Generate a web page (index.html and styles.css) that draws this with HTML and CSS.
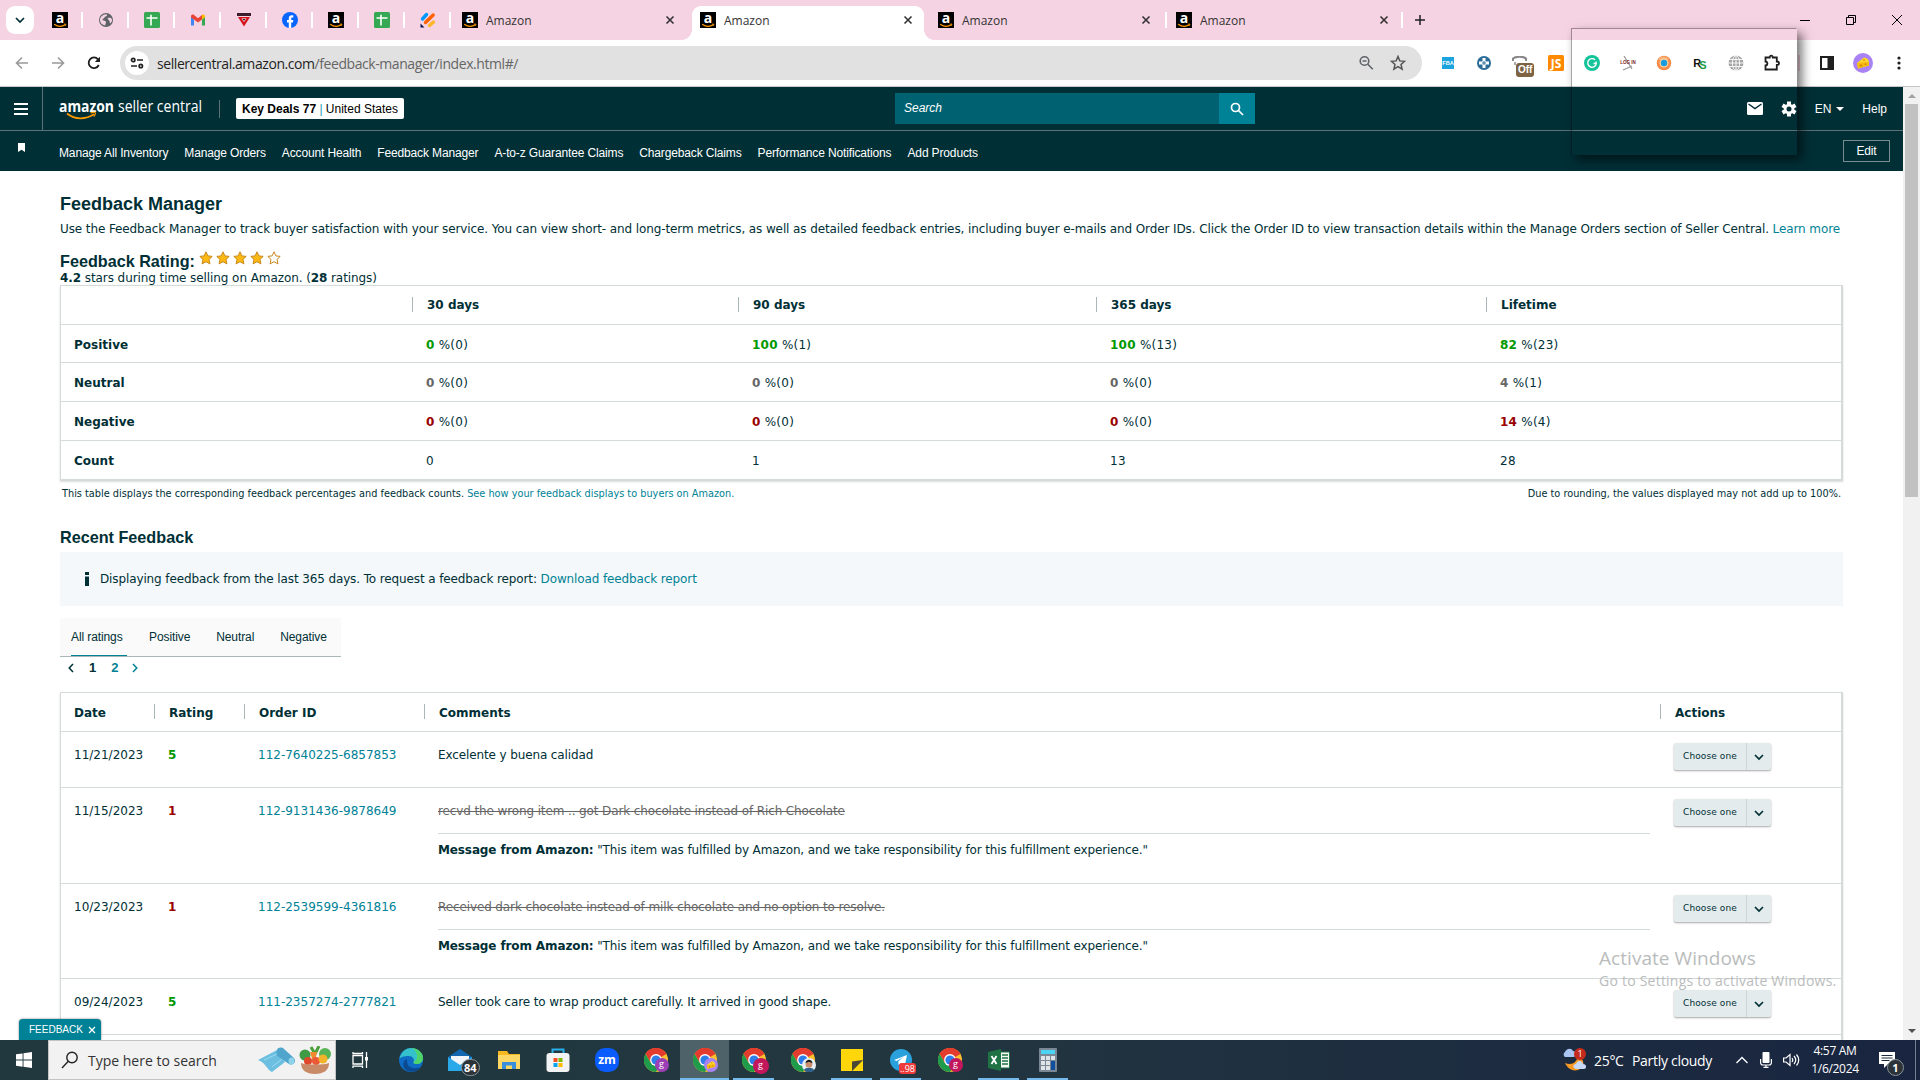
FILE: index.html
```html
<!DOCTYPE html>
<html lang="en">
<head>
  <meta charset="UTF-8">
  <meta name="viewport" content="width=device-width, initial-scale=1.0">
  <title>Amazon</title>
  <link rel="stylesheet" href="styles.css">
</head>
<body>
  <!-- shared icons -->
  <svg class="sprite" width="0" height="0">
    <symbol id="i-amazon" viewBox="0 0 16 16">
      <rect width="16" height="16" fill="#000"/>
      <text x="8" y="11.3" font-family="Open Sans" font-size="14" font-weight="700" fill="#fff" text-anchor="middle">a</text>
      <path d="M2.2 12.2c3.6 2.6 8 2.6 11.2.6" fill="none" stroke="#f90" stroke-width="1.3"/>
      <path d="M11.8 12.2l2.2-.2-.6 1.8" fill="none" stroke="#f90" stroke-width=".8"/>
    </symbol>
    <symbol id="i-sheet" viewBox="0 0 16 16">
      <rect width="16" height="16" rx="1.5" fill="#34a853"/>
      <path d="M2.5 6h11M7 2.8v10.6" stroke="#fff" stroke-width="1.6"/>
    </symbol>
    <symbol id="i-close" viewBox="0 0 10 10">
      <path d="M1.5 1.5l7 7M8.5 1.5l-7 7" stroke="#333" stroke-width="1.6"/>
    </symbol>
    <symbol id="i-down" viewBox="0 0 10 8">
      <path d="M1 2l4 4 4-4" fill="none" stroke="#002f36" stroke-width="1.7"/>
    </symbol>
    <symbol id="i-star" viewBox="0 0 14 14">
      <path d="M7 .8l1.9 4.1 4.3.5-3.2 3 .9 4.5L7 10.7l-3.9 2.2.9-4.5-3.2-3 4.3-.5z" stroke="#c8871b" stroke-width="1"/>
    </symbol>
    <symbol id="i-cheese" viewBox="0 0 20 20">
      <circle cx="10" cy="10" r="10" fill="#a983f5"/>
      <path d="M4 10l7-5.5c3 .3 4.8 2 5 4.500v3.500L5 15.500z" fill="#fdd52e"/>
      <path d="M4 10l12-1v3.500L5 15.500z" fill="#f6b912"/>
      <circle cx="8" cy="12.500" r="1.300" fill="#d98f00"/><circle cx="12.500" cy="11.300" r="1" fill="#d98f00"/><circle cx="11" cy="7" r="1" fill="#e0a300"/>
    </symbol>
    <symbol id="i-chrome" viewBox="0 0 24 24">
      <circle cx="12" cy="12" r="12" fill="#fbc02d"/>
      <path d="M12 12L1.600 6A12 12 0 0 1 22.400 6z" fill="#e33b2e"/>
      <path d="M12 6h10.400A12 12 0 0 0 1.600 6L7 15z" fill="#e33b2e"/>
      <path d="M1.600 6A12 12 0 0 0 12 24l5.200-9L12 12 6.800 15z" fill="#1e9b4b"/>
      <circle cx="12" cy="12" r="5.900" fill="#fff"/>
      <circle cx="12" cy="12" r="4.600" fill="#2f7de9"/>
    </symbol>
  </svg>

  <div class="tabstrip">
    <div class="tab-search"><svg width="10" height="8"><use href="#i-down"/></svg></div>
    <div class="pinned"><svg width="16" height="16"><use href="#i-amazon"/></svg></div>
    <div class="pinned">
      <svg width="16" height="16" viewBox="0 0 16 16"><circle cx="8" cy="8" r="7" fill="#5f6368"/><path d="M8 2.200c2 .3 1 2-.5 2.300s-.5 1.500-2 2-1.500 1.500 0 2 3 .5 2.500 2-1 2-.5 3C4 13 2 11 2 8s2.500-5.500 6-5.800zM10 6c1.500-.5 3-.5 3.800 1s-.5 4-1.800 4.500c-.5-1.500 0-2-.8-3S9 7 10 6z" fill="#f6d3e2"/></svg>
    </div>
    <div class="pinned"><svg width="16" height="16"><use href="#i-sheet"/></svg></div>
    <div class="pinned">
      <svg width="16" height="16" viewBox="0 0 16 16"><path d="M1 4v9.500h3V7.500z" fill="#4285f4"/><path d="M15 4v9.500h-3V7.500z" fill="#34a853"/><path d="M1 4.500C1 2.500 3 2 4 3l4 3.200L12 3v4.500L8 10.500 4 7.500 1 5.500z" fill="#ea4335"/><path d="M12 3c1-1 3-.5 3 1.500v1l-3 2z" fill="#fbbc04"/></svg>
    </div>
    <div class="pinned">
      <svg width="16" height="16" viewBox="0 0 16 16"><path d="M1 1h14v3H1z" fill="#3d1c2c"/><path d="M2 5h12L8 14.500z" fill="#d8121c"/><path d="M5.500 6.500h5L8 10z" fill="#fff"/><path d="M6.500 7h3L8 9z" fill="#222"/></svg>
    </div>
    <div class="pinned">
      <svg width="16" height="16" viewBox="0 0 16 16"><circle cx="8" cy="8" r="8" fill="#0866ff"/><path d="M6.800 16v-5.600H5V8h1.800V6.600c0-2.300 1.200-3.300 3-3.300.6 0 1.200.1 1.500.2v2h-.9c-.9 0-1.200.5-1.200 1.300V8h2.100l-.4 2.400H9.200V16z" fill="#fff"/></svg>
    </div>
    <div class="pinned"><svg width="16" height="16"><use href="#i-amazon"/></svg></div>
    <div class="pinned"><svg width="16" height="16"><use href="#i-sheet"/></svg></div>
    <div class="pinned">
      <svg width="16" height="16" viewBox="0 0 16 16" fill="none" stroke-width="3.400" stroke-linecap="round"><path d="M2.500 7l4-4.500" stroke="#0099ff"/><path d="M5.500 10.500L13.200 3" stroke="#ff6100"/><path d="M9.500 13.500l4-3.500" stroke="#ffb629"/><path d="M.5 11.500v4h4z" fill="#0a1551"/></svg>
    </div>
    <div class="tab"><svg width="16" height="16"><use href="#i-amazon"/></svg><span>Amazon</span><svg width="10" height="10"><use href="#i-close"/></svg></div>
    <div class="tab active"><svg width="16" height="16"><use href="#i-amazon"/></svg><span>Amazon</span><svg width="10" height="10"><use href="#i-close"/></svg></div>
    <div class="tab sep"><svg width="16" height="16"><use href="#i-amazon"/></svg><span>Amazon</span><svg width="10" height="10"><use href="#i-close"/></svg></div>
    <div class="tab sep"><svg width="16" height="16"><use href="#i-amazon"/></svg><span>Amazon</span><svg width="10" height="10"><use href="#i-close"/></svg></div>
    <svg class="new-tab" width="12" height="12" viewBox="0 0 12 12"><path d="M6 1v10M1 6h10" stroke="#222" stroke-width="1.500"/></svg>
    <div class="win-controls">
      <svg width="10" height="10"><path d="M0 5.500h10" stroke="#000"/></svg>
      <svg width="10" height="10"><path d="M.5 2.500h7v7h-7zM2.500 2.500v-2h7v7h-2" fill="none" stroke="#000"/></svg>
      <svg width="10" height="10"><path d="M0 0l10 10M10 0L0 10" stroke="#000"/></svg>
    </div>
  </div>

  <div class="toolbar">
    <svg class="nav-btn" width="14" height="14" viewBox="0 0 14 14"><path d="M13 7H2M7 1.500L1.500 7 7 12.500" fill="none" stroke="#999" stroke-width="1.600"/></svg>
    <svg class="nav-btn" width="14" height="14" viewBox="0 0 14 14"><path d="M1 7h11M7 1.500L12.500 7 7 12.500" fill="none" stroke="#999" stroke-width="1.600"/></svg>
    <svg class="nav-btn" width="14" height="14" viewBox="0 0 14 14"><path d="M11.800 9A5.300 5.300 0 1 1 11 3.300L12.300 5" fill="none" stroke="#1f1f1f" stroke-width="1.800"/><path d="M13 .8V6H7.800z" fill="#1f1f1f"/></svg>
    <div class="omnibox">
      <div class="site-info"><svg width="14" height="12" viewBox="0 0 14 12" fill="none" stroke="#222" stroke-width="1.700"><circle cx="3.200" cy="3" r="1.700"/><path d="M7 3h6M1 9h6"/><circle cx="10.800" cy="9" r="1.700"/></svg></div>
      <div class="url">sellercentral.amazon.com<span>/feedback-manager/index.html#/</span></div>
      <svg width="16" height="16" viewBox="0 0 16 16" fill="none" stroke="#5f6368" stroke-width="1.600"><circle cx="6.500" cy="6" r="4.300"/><path d="M9.800 9.300l5 5M4.500 6h4"/></svg>
      <svg width="16" height="16" viewBox="0 0 16 16"><path d="M8 1.500l1.800 4.400 4.800.4-3.600 3.100 1.100 4.700L8 11.600l-4.100 2.500L5 9.400 1.400 6.300l4.800-.4z" fill="none" stroke="#555" stroke-width="1.500"/></svg>
    </div>
    <div class="extensions">
      <div class="ext"><svg width="12" height="12"><rect width="12" height="12" fill="#1ba4dd"/><text x="6" y="7.500" font-size="5.500" font-weight="700" font-family="Liberation Sans" text-anchor="middle" fill="#fff">FBA</text></svg></div>
      <div class="ext"><svg width="14" height="14"><circle cx="7" cy="7" r="7" fill="#2b6c98"/><path d="M5.500 2h3v3.500H12v3H8.500V12h-3V8.500H2v-3h3.500z" fill="#fff"/><path d="M7 5v4M5 7h4" stroke="#2b6c98"/></svg></div>
      <div class="ext off"><svg width="16" height="14"><path d="M1 5V2.500C4 0 11 0 14 2.500V5" fill="none" stroke="#888" stroke-width="2"/><path d="M3 6v3" stroke="#aaa" stroke-width="2"/></svg><b>Off</b></div>
      <div class="ext"><svg width="16" height="16"><rect width="16" height="16" rx="1.500" fill="#ff8a00"/><text x="8" y="12.500" font-size="12" font-weight="700" font-family="Open Sans" text-anchor="middle" fill="#fff">JS</text></svg></div>
      <div class="ext"><svg width="16" height="16"><circle cx="8" cy="8" r="8" fill="#15c39a"/><path d="M11 4.800a4.300 4.300 0 1 0 1.300 3.700H9.500M12 6.500v2.500" fill="none" stroke="#fff" stroke-width="1.400"/></svg></div>
      <div class="ext"><svg width="18" height="16"><path d="M5 1l8 13M4 15l9-4" stroke="#999" stroke-width="1.300"/><text x="9" y="9" font-size="4.500" font-weight="700" font-family="Liberation Sans" text-anchor="middle" fill="#7c1c1c">LOG IN</text></svg></div>
      <div class="ext"><svg width="16" height="16"><circle cx="8" cy="8" r="7.300" fill="#f58d4c"/><path d="M2 4a7.300 7.300 0 0 1 11 0L8 8z" fill="#fbb277"/><circle cx="8" cy="8" r="4.500" fill="#ffd09a"/><circle cx="8" cy="8" r="3.200" fill="#189ce0"/></svg></div>
      <div class="ext rs"><b>R</b><b>S</b></div>
      <div class="ext"><svg width="16" height="16" fill="none" stroke="#fff" stroke-width=".9"><circle cx="8" cy="8" r="7.500" fill="#a5a5a5" stroke="none"/><ellipse cx="8" cy="8" rx="3.600" ry="7.500"/><path d="M8 0v16M0 8h16M1 4.500h14M1 11.500h14"/></svg></div>
      <div class="ext"><svg width="18" height="18"><path d="M2.500 3.500h4.200C6.500 1 10 1 9.800 3.500h4v4c3 0 3 3.500 0 3.500v4.500H2.500v-4c2.500 0 2.500-4 0-4z" fill="none" stroke="#1f1f1f" stroke-width="1.800"/></svg></div>
    </div>
    <i class="bar-sep"></i>
    <div class="ext"><svg width="14" height="14"><path d="M1 1h12v12H1z" fill="none" stroke="#1f1f1f" stroke-width="2"/><path d="M7.500 1H13v12H7.500z" fill="#1f1f1f"/></svg></div>
    <div class="ext"><svg width="20" height="20"><use href="#i-cheese"/></svg></div>
    <div class="ext"><svg width="4" height="16" fill="#1f1f1f"><circle cx="2" cy="3" r="1.600"/><circle cx="2" cy="8" r="1.600"/><circle cx="2" cy="13" r="1.600"/></svg></div>
  </div>

  <div class="viewport">
    <div class="page">
      <div class="masthead">
        <div class="burger"><svg width="14" height="12"><path d="M0 1h14M0 6h14M0 11h14" stroke="#fff" stroke-width="1.800"/></svg></div>
        <svg class="logo" width="144" height="28" viewBox="0 0 144 28">
          <text x="0" y="15.500" font-family="Open Sans" font-weight="700" font-size="16" fill="#fff" textLength="55" lengthAdjust="spacingAndGlyphs">amazon</text>
          <text x="59" y="15.500" font-family="Open Sans" font-size="16" fill="#fff" textLength="84" lengthAdjust="spacingAndGlyphs">seller central</text>
          <path d="M8 17.500c8 6.500 19 6 27 .8" fill="none" stroke="#f90" stroke-width="1.800"/><path d="M31.500 16.800c3-.8 5-.6 5 .2s-.6 2.400-1.800 3.500" fill="none" stroke="#f90" stroke-width="1.200"/>
        </svg>
        <div class="account"><b>Key Deals 77</b> <i>|</i> United States</div>
        <div class="search">
          <div class="search-input">Search</div>
          <div class="search-btn"><svg width="14" height="14" fill="none" stroke="#fff" stroke-width="1.700"><circle cx="5.500" cy="5.500" r="4"/><path d="M8.500 8.500l4.500 4.500"/></svg></div>
        </div>
        <div class="tools">
          <svg width="16" height="13" viewBox="0 0 16 13"><rect width="16" height="13" rx="1.500" fill="#fff"/><path d="M1.500 2L8 6.500 14.500 2" fill="none" stroke="#002f36" stroke-width="1.500"/></svg>
          <svg width="16" height="16" viewBox="0 0 16 16"><g stroke="#fff" stroke-width="4"><path d="M8 .5v15M1.500 4.250l13 7.500M14.500 4.250l-13 7.500"/></g><circle cx="8" cy="8" r="5.300" fill="#fff"/><circle cx="8" cy="8" r="2.500" fill="#002f36"/></svg>
          <span class="lang">EN<i></i></span>
          <span>Help</span>
        </div>
      </div>
      <div class="favbar">
        <div class="bookmark"><svg width="7" height="9"><path d="M0 0h7v9L3.500 6.800 0 9z" fill="#fff"/></svg></div>
        <a>Manage All Inventory</a><a>Manage Orders</a><a>Account Health</a><a>Feedback Manager</a><a>A-to-z Guarantee Claims</a><a>Chargeback Claims</a><a>Performance Notifications</a><a>Add Products</a>
        <div class="edit">Edit</div>
      </div>

      <div class="content">
        <h1>Feedback Manager</h1>
        <p class="intro">Use the Feedback Manager to track buyer satisfaction with your service. You can view short- and long-term metrics, as well as detailed feedback entries, including buyer e-mails and Order IDs. Click the Order ID to view transaction details within the Manage Orders section of Seller Central. <a>Learn more</a></p>
        <div class="rating-title">
          <h2>Feedback Rating:</h2>
          <div class="stars">
            <svg width="14" height="14" fill="#fdb913"><use href="#i-star"/></svg><svg width="14" height="14" fill="#fdb913"><use href="#i-star"/></svg><svg width="14" height="14" fill="#fdb913"><use href="#i-star"/></svg><svg width="14" height="14" fill="#fdb913"><use href="#i-star"/></svg><svg width="14" height="14" fill="#fff"><use href="#i-star"/></svg>
          </div>
        </div>
        <p class="summary"><b>4.2</b> stars during time selling on Amazon. (<b>28</b> ratings)</p>

        <div class="card summary-table">
          <div class="row head"><div></div><div><b>30 days</b></div><div><b>90 days</b></div><div><b>365 days</b></div><div><b>Lifetime</b></div></div>
          <div class="row short"><div><b>Positive</b></div><div><b class="good">0</b> %(0)</div><div><b class="good">100</b> %(1)</div><div><b class="good">100</b> %(13)</div><div><b class="good">82</b> %(23)</div></div>
          <div class="row"><div><b>Neutral</b></div><div><b class="meh">0</b> %(0)</div><div><b class="meh">0</b> %(0)</div><div><b class="meh">0</b> %(0)</div><div><b class="meh">4</b> %(1)</div></div>
          <div class="row"><div><b>Negative</b></div><div><b class="bad">0</b> %(0)</div><div><b class="bad">0</b> %(0)</div><div><b class="bad">0</b> %(0)</div><div><b class="bad">14</b> %(4)</div></div>
          <div class="row"><div><b>Count</b></div><div>0</div><div>1</div><div>13</div><div>28</div></div>
        </div>
        <div class="footnote"><span>This table displays the corresponding feedback percentages and feedback counts. <a>See how your feedback displays to buyers on Amazon.</a></span><span>Due to rounding, the values displayed may not add up to 100%.</span></div>

        <h2 class="recent">Recent Feedback</h2>
        <div class="alert"><svg width="4" height="14"><path d="M0 0h4v3H0zM0 4.500h4V14H0z" fill="#002f36"/></svg><span>Displaying feedback from the last 365 days. To request a feedback report: <a>Download feedback report</a></span></div>

        <div class="filters"><span class="on">All ratings</span><span>Positive</span><span>Neutral</span><span>Negative</span></div>
        <div class="pager">
          <svg width="6" height="10"><path d="M5 1L1.200 5 5 9" fill="none" stroke="#002f36" stroke-width="1.500"/></svg>
          <b>1</b><b class="link">2</b>
          <svg width="6" height="10"><path d="M1 1l3.800 4L1 9" fill="none" stroke="#008296" stroke-width="1.500"/></svg>
        </div>

        <div class="card feedback-table">
          <div class="row head"><div><b>Date</b></div><div><b>Rating</b></div><div><b>Order ID</b></div><div><b>Comments</b></div><div><b>Actions</b></div></div>
          <div class="row entry">
            <div>11/21/2023</div><div><b class="good">5</b></div><div><a>112-7640225-6857853</a></div><div class="comment">Excelente y buena calidad</div>
            <div class="actions"><div class="choose"><span>Choose one</span><svg width="10" height="8"><use href="#i-down"/></svg></div></div>
          </div>
          <div class="row entry tall">
            <div>11/15/2023</div><div><b class="bad">1</b></div><div><a>112-9131436-9878649</a></div>
            <div class="comment"><p class="struck">recvd the wrong item .. got Dark chocolate instead of Rich Chocolate</p><p class="reply"><b>Message from Amazon:</b> "This item was fulfilled by Amazon, and we take responsibility for this fulfillment experience."</p></div>
            <div class="actions"><div class="choose"><span>Choose one</span><svg width="10" height="8"><use href="#i-down"/></svg></div></div>
          </div>
          <div class="row entry tall">
            <div>10/23/2023</div><div><b class="bad">1</b></div><div><a>112-2539599-4361816</a></div>
            <div class="comment"><p class="struck">Received dark chocolate instead of milk chocolate and no option to resolve.</p><p class="reply"><b>Message from Amazon:</b> "This item was fulfilled by Amazon, and we take responsibility for this fulfillment experience."</p></div>
            <div class="actions"><div class="choose"><span>Choose one</span><svg width="10" height="8"><use href="#i-down"/></svg></div></div>
          </div>
          <div class="row entry">
            <div>09/24/2023</div><div><b class="good">5</b></div><div><a>111-2357274-2777821</a></div><div class="comment">Seller took care to wrap product carefully. It arrived in good shape.</div>
            <div class="actions"><div class="choose"><span>Choose one</span><svg width="10" height="8"><use href="#i-down"/></svg></div></div>
          </div>
          <div class="row entry"></div>
        </div>
      </div>
    </div>
    <div class="scrollbar"><i class="up"></i><div class="thumb"></div><i class="down"></i></div>
    <div class="feedback-tag">FEEDBACK<svg width="8" height="8"><path d="M1 1l6 6M7 1L1 7" stroke="#fff" stroke-width="1.300"/></svg></div>
  </div>

  <div class="taskbar">
    <div class="start"><svg width="16" height="16" fill="#fff"><path d="M0 2.300L6.600 1.400V7.600H0zM7.500 1.200L16 0v7.600H7.500zM0 8.500h6.600v6.200L0 13.800zM7.500 8.500H16V16l-8.500-1.200z"/></svg></div>
    <div class="task-search">
      <svg width="18" height="18" fill="none" stroke="#222" stroke-width="1.400"><circle cx="11" cy="6.500" r="5.200"/><path d="M7.300 10.300L1 17"/></svg>
      <span>Type here to search</span>
      <svg width="38" height="26" viewBox="0 0 38 26"><path d="M0 13L19 3l8 12-13 10C9 23 8 16 0 13z" fill="#6cbfe0"/><path d="M19 3c1-3 5-3 7-1l10 9c3 4-1 8-5 6L18 8z" fill="#4fa5cc"/><ellipse cx="33.500" cy="14" rx="3" ry="3.600" fill="#8fd3ea"/><path d="M6 13l13-6M14 20l10-8" stroke="#9adcf0"/></svg>
      <svg width="32" height="28" viewBox="0 0 32 28"><circle cx="6" cy="9" r="5.500" fill="#3f9b46"/><circle cx="26" cy="8" r="6" fill="#58b356"/><path d="M12 1l4 7 4-8" stroke="#4ba03b" stroke-width="3" fill="none"/><path d="M11 6h7l-3 13z" fill="#f28b2e"/><circle cx="9" cy="15" r="4" fill="#e0482c"/><circle cx="17" cy="15" r="4" fill="#ea5a36"/><circle cx="24" cy="13" r="4.500" fill="#f3b32b"/><path d="M2 17c4 2 24 2 28 0 0 7-5 11-14 11S2 24 2 17z" fill="#c98a68"/></svg>
    </div>
    <div class="app view"><svg width="17" height="16" fill="none" stroke="#fff" stroke-width="1.300"><path d="M1 3.500h9.500v8.500H1zM1 0v1.500h9.500V0M1 16v-1.800h9.500V16M14.500 0v16"/><path d="M13 5h3v3.500h-3z" fill="#fff" stroke="none"/></svg></div>
    <div class="app"><svg width="24" height="24"><circle cx="12" cy="12" r="12" fill="#0f6cc4"/><path d="M.5 11C2 3 8 0 12 0c7 0 12 5 12 10 0 4-3 6-6.500 6-2 0-3.500-1-3-2 1.500-3-1-6-5-6C5 8 1.500 9 .5 11z" fill="#35c1c9"/><path d="M13 0c7 1 11 5 11 10 0 4-3 6-6.500 6-2 0-3.500-1-3-2C20 12 19 3 13 0z" fill="#4fd36b"/><path d="M8 13c0 6 6 9 13 6-4 6-11 6-15 2-3-4-2-8 2-10z" fill="#0b4a91"/></svg></div>
    <div class="app"><svg width="24" height="24"><path d="M0 9l12-8 12 8v14H0z" fill="#1267b0"/><path d="M3 8h18v8l-9 4-9-4z" fill="#f2f6fa"/><path d="M0 9l12 8 12-8v14H0z" fill="#29a8ea"/></svg><em class="count">84</em></div>
    <div class="app"><svg width="22" height="20"><path d="M0 1h9l2 3h11v15H0z" fill="#f5b81f"/><path d="M0 5h22v14H0z" fill="#ffd765"/><path d="M4 19v-7h14v7h-4v-3.500H8V19z" fill="#3a8fdc"/></svg></div>
    <div class="app"><svg width="24" height="24"><path d="M6.500 6V1.500h11V6" fill="none" stroke="#29b0ea" stroke-width="2"/><rect x=".5" y="5" width="23" height="19" rx="3" fill="#f2f3f4"/><path d="M7.500 10h4v4h-4z" fill="#f25022"/><path d="M12.500 10h4v4h-4z" fill="#7fba00"/><path d="M7.500 15h4v4h-4z" fill="#00a4ef"/><path d="M12.500 15h4v4h-4z" fill="#ffb900"/></svg></div>
    <div class="app"><svg width="24" height="24"><rect width="24" height="24" rx="10" fill="#0b5cff"/><text x="12" y="15.800" font-family="Open Sans" font-size="12" font-weight="700" fill="#fff" text-anchor="middle">zm</text></svg></div>
    <div class="app"><svg width="24" height="24"><use href="#i-chrome"/></svg><em class="who violet">g</em></div>
    <div class="app running current"><svg width="24" height="24"><use href="#i-chrome"/></svg><em class="who"><svg width="14" height="14"><use href="#i-cheese"/></svg></em></div>
    <div class="app running"><svg width="24" height="24"><use href="#i-chrome"/></svg><em class="who magenta big">g</em></div>
    <div class="app"><svg width="24" height="24"><use href="#i-chrome"/></svg><em class="who"><svg width="14" height="14" viewBox="0 0 14 14"><circle cx="7" cy="7" r="7" fill="#e8eef2"/><path d="M2 12c1-3 9-3 10 0-2 3-8 3-10 0z" fill="#2f5f8c"/><circle cx="7" cy="6.500" r="3.300" fill="#c98d6b"/><path d="M3.500 5.500c0-5 7-5 7 0-2-2-5-2-7 0z" fill="#1b1b1b"/></svg></em></div>
    <div class="app running"><svg width="22" height="22"><path d="M0 0h22v11L11 22H0z" fill="#ffd60a"/><path d="M22 11v11H11z" fill="#ffd60a"/><path d="M11 22V12.500L22 11z" fill="#4a4537"/></svg></div>
    <div class="app running"><svg width="22" height="22"><circle cx="11" cy="11" r="11" fill="#2aa1dd"/><path d="M4 11l13-5-2.300 11-4-3-2 2-.5-3.500 5-4.500-6.500 4z" fill="#fff"/></svg><em class="unread">..98</em></div>
    <div class="app"><svg width="24" height="24"><use href="#i-chrome"/></svg><em class="who magenta">g</em></div>
    <div class="app running"><svg width="22" height="22"><path d="M12 3h9.500v16H12z" fill="#f3f8f4" stroke="#1f7244"/><path d="M14 6h6M14 9h6M14 12h6M14 15h6" stroke="#1f7244" stroke-width="1.500"/><path d="M0 3l13-3v22L0 19z" fill="#1f7244"/><path d="M3.500 7l5 8M8.500 7l-5 8" stroke="#fff" stroke-width="1.800"/></svg></div>
    <div class="app running"><svg width="18" height="24"><rect width="18" height="24" rx="1" fill="#7b8794"/><path d="M2 2h14v4H2z" fill="#4cd4f5"/><path d="M2 8h4v4H2zM7 8h4v4H7zM12 8h4v4h-4zM2 13h4v4H2zM7 13h4v4H7zM2 18h4v4H2zM7 18h4v4H7z" fill="#dfe4e8"/><path d="M12 13h4v9h-4z" fill="#0f4f9e"/></svg></div>
    <div class="tray">
      <svg width="24" height="24" viewBox="0 0 24 24"><path d="M3 15c7 3 12-1 13-7 6 3 7 9 3 12-5 5-13 2-16-5z" fill="#f79a25"/><path d="M3 9a3 3 0 0 1 0-5c1-3 6-5 8-1 4 0 4 6 0 6z" fill="#a9c6f2"/><path d="M14 21c-4-1-3-5 0-5 1-4 6-4 7 0 4 0 4 5 1 5z" fill="#c6daf8"/><circle cx="18" cy="6" r="6" fill="#c42b1c"/><text x="18" y="9.300" font-family="Open Sans" font-size="9" fill="#fff" text-anchor="middle">1</text></svg>
      <span class="temp">25°C</span><span class="sky">Partly cloudy</span>
      <svg class="chev" width="12" height="8"><path d="M.5 7L6 1.500 11.500 7" fill="none" stroke="#fff" stroke-width="1.300"/></svg>
      <svg class="mic" width="12" height="16"><rect x="2.500" width="7" height="11" rx="1" fill="#fff"/><path d="M.6 7v3.500Q.6 13 3 13h6q2.400 0 2.400-2.500V7M6 13v2.500M3.500 15.400h5" fill="none" stroke="#fff" stroke-width="1.200"/></svg>
      <svg class="vol" width="17" height="14" fill="none" stroke="#fff" stroke-width="1.200"><path d="M.6 5h2.500L7 1.500v11L3.100 9H.6zM9 5q1.500 2 0 4M11 3q3.500 4 0 8M13.500 1.500q4.500 5.500 0 11"/></svg>
      <div class="clock"><div>4:57 AM</div><div>1/6/2024</div></div>
      <div class="notes"><svg width="16" height="16"><path d="M0 0h16v12H9l-4 4v-4H0z" fill="#fff"/><path d="M2.500 3.500h11M2.500 6h11M2.500 8.500h8" stroke="#1b2a3f" stroke-width="1.200"/></svg><em class="count">1</em></div>
    </div>
  </div>

  <div class="watermark"><div>Activate Windows</div><span>Go to Settings to activate Windows.</span></div>
  <div class="ghost"></div>
</body>
</html>
```
FILE: styles.css
```css
*{
  box-sizing: border-box;
}
body{
  margin: 0;
  width: 1920px;
  height: 1080px;
  overflow: hidden;
  position: relative;
  display: flex;
  flex-direction: column;
  background: #fff;
  color: #002f36;
  font-family: "DejaVu Sans", Verdana, sans-serif;
  font-size: 12px;
}
svg{
  display: block;
  flex: none;
}
.sprite{
  position: absolute;
}
h1,h2,p{
  margin: 0;
}
em,i{
  font-style: normal;
}

/* browser tabs */
.tabstrip{
  height: 40px;
  flex: none;
  display: flex;
  align-items: center;
  background: #f6d3e2;
  padding-left: 6px;
}
.tab-search{
  width: 28px;
  height: 28px;
  margin-right: 3px;
  border-radius: 9px;
  background: #fff;
  display: flex;
  align-items: center;
  justify-content: center;
}
.pinned{
  width: 46px;
  height: 16px;
  padding-left: 2px;
  display: flex;
  justify-content: center;
  border-right: 2px solid #fff;
}
.tab{
  width: 238px;
  height: 34px;
  padding: 0 14px 0 11px;
  display: flex;
  align-items: center;
  position: relative;
}
.tab span{
  flex: 1;
  padding-left: 8px;
  font: 12px "Open Sans", sans-serif;
  color: #333;
}
.tab.active{
  width: 232px;
  height: 34px;
  margin: 6px 3px 0;
  padding: 0 11px 6px 8px;
  background: #fff;
  border-radius: 9px 9px 0 0;
}
.tab.active::before,.tab.active::after{
  content: "";
  position: absolute;
  bottom: 0;
  width: 10px;
  height: 10px;
}
.tab.active::before{
  left: -10px;
  background: radial-gradient(circle at 0 0, transparent 9.5px, #fff 10px);
}
.tab.active::after{
  right: -10px;
  background: radial-gradient(circle at 100% 0, transparent 9.5px, #fff 10px);
}
.tab.sep + .tab.sep{
  border-right: 2px solid #fff;
  border-left: 2px solid #fff;
  height: 16px;
  padding: 0 12px 0 9px;
}
.new-tab{
  margin-left: 11px;
}
.win-controls{
  margin-left: auto;
  padding-right: 18px;
  display: flex;
  gap: 36px;
}

/* address bar */
.toolbar{
  height: 47px;
  flex: none;
  display: flex;
  align-items: center;
  background: #fff;
  border-bottom: 1px solid #c6c6c6;
  padding-left: 15px;
}
.nav-btn{
  margin-right: 22px;
}
.omnibox{
  width: 1302px;
  height: 34px;
  margin-left: -3px;
  padding: 0 16px 0 5px;
  border-radius: 17px;
  background: #e1e1e1;
  display: flex;
  align-items: center;
  gap: 16px;
}
.site-info{
  width: 24px;
  height: 24px;
  border-radius: 50%;
  background: #fff;
  display: flex;
  align-items: center;
  justify-content: center;
}
.url{
  flex: 1;
  margin-left: -8px;
  font: 14px "Open Sans", sans-serif;
  letter-spacing: -.43px;
  color: #1f1f1f;
}
.url span{
  color: #666;
}
.extensions{
  display: flex;
  margin-left: 8px;
}
.ext{
  width: 36px;
  height: 34px;
  display: flex;
  align-items: center;
  justify-content: center;
  position: relative;
}
.off b{
  position: absolute;
  left: 14px;
  top: 17px;
  padding: 0 2px;
  border-radius: 3px;
  background: #7d6344;
  color: #fff;
  font: 700 10px/14px "Liberation Sans", sans-serif;
}
.rs b{
  font: 700 11px "Liberation Sans", sans-serif;
  color: #111;
}
.rs b + b{
  margin: 4px 0 0 -2px;
  color: #1c9b43;
}
.bar-sep{
  width: 2px;
  height: 16px;
  margin: 0 9px 0 8px;
  background: #f6d3e2;
}

.viewport{
  flex: 1;
  min-height: 0;
  display: flex;
  position: relative;
  overflow: hidden;
}
.page{
  flex: 1;
  min-width: 0;
}

/* seller central header */
.masthead{
  height: 44px;
  display: flex;
  align-items: center;
  background: #002f36;
  border-bottom: 1px solid #5d7276;
  color: #fff;
  font-family: "Liberation Sans", Arial, sans-serif;
}
.burger{
  width: 43px;
  height: 43px;
  padding-left: 14px;
  display: flex;
  align-items: center;
  border-right: 1px solid #5d7276;
}
.logo{
  margin: 3px 0 0 16px;
}
.account{
  height: 21px;
  margin-left: 33px;
  padding: 0 6px;
  width: 168px;
  border-radius: 2px;
  background: #fff;
  color: #000;
  font-size: 12px;
  line-height: 22px;
  position: relative;
  white-space: nowrap;
}
.account i{
  color: #1a9cb0;
}
.account::before{
  content: "";
  position: absolute;
  left: -17px;
  top: 2px;
  width: 1px;
  height: 18px;
  background: #5d7276;
}
.search{
  width: 360px;
  height: 31px;
  margin-left: 491px;
  display: flex;
}
.search-input{
  flex: 1;
  padding-left: 9px;
  background: #006170;
  font-size: 12px;
  font-style: italic;
  line-height: 31px;
}
.search-btn{
  width: 36px;
  background: #008296;
  display: flex;
  align-items: center;
  justify-content: center;
}
.tools{
  margin-left: auto;
  padding-right: 16px;
  display: flex;
  align-items: center;
  gap: 18px;
  font-size: 12px;
}
.lang{
  display: flex;
  align-items: center;
  gap: 5px;
}
.lang i{
  border: 4px solid transparent;
  border-top-color: #fff;
  border-bottom: 0;
}
.favbar{
  height: 40px;
  display: flex;
  align-items: center;
  gap: 16px;
  background: #002f36;
  color: #fff;
  font: 12px "Liberation Sans", Arial, sans-serif;
  letter-spacing: -.14px;
  padding: 0 13px 0 18px;
}
.bookmark{
  width: 25px;
  padding-bottom: 8px;
}
.favbar a{
  padding-top: 3px;
}
.edit{
  width: 47px;
  height: 22px;
  margin-left: auto;
  border: 1px solid #7b8c8f;
  line-height: 20px;
  text-align: center;
}

/* page body */
.content{
  padding: 23px 60px 0;
}
.content a,.link{
  color: #008296;
}
h1,h2{
  font: 700 18px/20px "Liberation Sans", Arial, sans-serif;
}
h2{
  font-size: 16.2px;
}
.intro{
  margin-top: 6px;
  line-height: 18px;
  letter-spacing: -.107px;
  white-space: nowrap;
}
.rating-title{
  display: flex;
  margin-top: 13px;
  height: 19px;
}
.stars{
  display: flex;
  gap: 3px;
  margin-left: 4px;
}
.summary{
  line-height: 16px;
  height: 15px;
  letter-spacing: -.08px;
}
.card{
  border: 1px solid #d5dbdb;
  border-right-width: 2px;
  border-bottom-width: 2px;
  box-shadow: 0 1px 2px rgba(0,0,0,.15);
}
.row{
  display: grid;
}
.row + .row{
  border-top: 1px solid #d5dbdb;
}
.summary-table .row{
  grid-template-columns: 351px 326px 358px 390px 1fr;
  height: 39px;
  align-items: center;
  padding-top: 1px;
}
.summary-table .head,.summary-table .short{
  height: 38px;
}
.summary-table .short{
  padding-top: 2px;
}
.summary-table .row:not(.head) > div + div{
  letter-spacing: .25px;
}
.row > div{
  padding-left: 14px;
}
.row > div:first-child{
  padding-left: 13px;
}
.head > div{
  line-height: 18px;
}
.head > div + div{
  border-left: 1px solid #aab7b8;
  height: 15px;
}
.summary-table .head > div{
  margin-top: -2px;
  line-height: 17px;
}
.good{
  color: #090;
}
.meh{
  color: #666;
}
.bad{
  color: #900;
}
.footnote{
  display: flex;
  justify-content: space-between;
  padding: 6px 2px 0;
  font-size: 9.75px;
  line-height: 14px;
}
.recent{
  margin-top: 26px;
}
.alert{
  height: 54px;
  margin-top: 5px;
  padding-left: 25px;
  display: flex;
  align-items: center;
  gap: 11px;
  background: #f4f8fa;
  letter-spacing: -.12px;
}
.filters{
  width: 281px;
  height: 39px;
  margin-top: 12px;
  padding: 0 11px;
  display: flex;
  background: #fafafa;
  border-bottom: 1px solid #aab7b8;
  font: 12px/38px "Liberation Sans", Arial, sans-serif;
  letter-spacing: -.1px;
}
.filters span{
  flex: none;
  margin-right: 26px;
}
.filters .on{
  width: 56px;
  margin-right: 22px;
  border-bottom: 1px solid #008296;
}
.pager{
  height: 22px;
  padding-left: 8px;
  display: flex;
  align-items: center;
  font: 700 13px "Liberation Sans", Arial, sans-serif;
}
.pager b{
  margin: -2px 0 0 15px;
}
.pager b + svg{
  margin-left: 14px;
}
.feedback-table{
  margin-top: 13px;
}
.feedback-table .row{
  grid-template-columns: 93px 90px 180px 1236px 1fr;
  height: 56px;
  align-items: start;
}
.feedback-table .tall{
  height: 96px;
}
.feedback-table .tall + .tall{
  height: 95px;
}
.feedback-table .head{
  height: 38px;
  padding-top: 11px;
}
.entry > div{
  padding-top: 15px;
  line-height: 16px;
}
.entry > .actions{
  padding-top: 11px;
}
.entry > .comment{
  letter-spacing: -.12px;
}
.struck{
  color: #666;
  text-decoration: line-through;
  padding-bottom: 14px;
}
.reply{
  width: 1212px;
  border-top: 1px solid #d5dbdb;
  padding-top: 8px;
}
.choose{
  width: 97px;
  height: 27px;
  display: flex;
  align-items: center;
  background: #e3ebec;
  border-radius: 2px;
  box-shadow: 0 1px 2px rgba(0,0,0,.35);
  font: 9px "DejaVu Sans", sans-serif;
}
.choose span{
  width: 73px;
  line-height: 26px;
  height: 27px;
  padding-left: 9px;
  border-right: 1px solid #cdd6d7;
  letter-spacing: .1px;
}
.choose svg{
  margin-left: 7px;
}

.scrollbar{
  width: 17px;
  display: flex;
  flex-direction: column;
  align-items: center;
  background: #f1f1f1;
}
.scrollbar i{
  border: 4px solid transparent;
}
.scrollbar .up{
  margin: 3px 0 6px;
  border-bottom-color: #a3a3a3;
}
.scrollbar .down{
  margin: auto 0 3px;
  border-top-color: #505050;
}
.thumb{
  width: 13px;
  height: 393px;
  background: #c1c1c1;
}
.feedback-tag{
  position: absolute;
  left: 19px;
  bottom: 0;
  width: 82px;
  height: 21px;
  padding-left: 10px;
  display: flex;
  align-items: center;
  gap: 5px;
  background: #008296;
  border-radius: 4px 4px 0 0;
  box-shadow: 0 0 2px rgba(0,0,0,.6);
  color: #fff;
  font: 10px "Liberation Sans", Arial, sans-serif;
}

/* windows taskbar */
.taskbar{
  height: 40px;
  flex: none;
  display: flex;
  background: linear-gradient(90deg, #21383f, #22373f 45%, #1f3040 65%, #192540);
  color: #fff;
  font-family: "Open Sans", sans-serif;
}
.start{
  width: 48px;
  display: flex;
  align-items: center;
  justify-content: center;
}
.task-search{
  width: 288px;
  padding: 0 4px 0 12px;
  display: flex;
  align-items: center;
  background: #f2f2f2;
  border: 1px solid #c4c4c4;
  color: #333;
  font-size: 14px;
}
.task-search span{
  flex: 1;
  padding-left: 9px;
}
.task-search svg + svg{
  margin-left: 3px;
}
.app{
  width: 49px;
  display: flex;
  align-items: center;
  justify-content: center;
  position: relative;
}
.view{
  margin-right: 1px;
}
.running{
  border-bottom: 2px solid #76b9ed;
  border-top: 2px solid transparent;
  width: 41px;
  margin: 0 4px;
}
.current{
  width: 49px;
  margin: 0;
  background: #4e626a;
  border-top-color: #4e626a;
}
.who{
  position: absolute;
  left: calc(50% - 1px);
  top: 18px;
  width: 14px;
  height: 14px;
  border-radius: 50%;
  font-size: 9px;
  line-height: 12px;
  text-align: center;
}
.running .who{
  top: 16px;
}
.violet{
  background: #9c3fb5;
}
.magenta{
  background: #c2185b;
}
.big{
  width: 16px;
  height: 16px;
  line-height: 14px;
}
.count{
  position: absolute;
  left: 26px;
  top: 19px;
  min-width: 17px;
  height: 17px;
  padding: 0 2px;
  border: 1px solid #8a949a;
  border-radius: 9px;
  background: #2b3238;
  font: 700 11px/15px "Open Sans", sans-serif;
  text-align: center;
}
.unread{
  position: absolute;
  left: 19px;
  top: 21px;
  padding: 0 1px;
  border-radius: 3px;
  background: #ef3b3b;
  font-size: 9px;
  line-height: 11px;
}
.tray{
  margin-left: auto;
  display: flex;
  align-items: center;
  font-size: 14px;
  white-space: nowrap;
}
.temp{
  width: 30px;
  margin: 0 8px;
  letter-spacing: -.3px;
}
.sky{
  width: 80px;
  letter-spacing: -.3px;
}
.chev{
  margin-left: 24px;
}
.mic{
  margin-left: 12px;
}
.vol{
  margin-left: 11px;
}
.clock{
  width: 46px;
  margin-left: 12px;
  font-size: 12px;
  line-height: 18px;
  letter-spacing: -.3px;
}
.clock div{
  display: flex;
  justify-content: center;
}
.notes{
  position: relative;
  width: 37px;
  height: 40px;
  margin: 0 4px 0 21px;
  padding-top: 12px;
  border-right: 1px solid #75808f;
}
.notes .count{
  left: 8px;
}

/* overlays */
.watermark{
  position: absolute;
  left: 1599px;
  top: 945px;
  color: #b9bcbc;
  font: 14px/20px "Open Sans", sans-serif;
  letter-spacing: .23px;
  white-space: nowrap;
}
.watermark div{
  font-size: 19px;
  line-height: 26px;
  letter-spacing: .05px;
}
.ghost{
  position: absolute;
  left: 1571px;
  top: 28px;
  width: 226px;
  height: 127px;
  border: 1px solid rgba(0,0,0,.35);
  border-right-color: transparent;
  border-bottom-color: transparent;
  box-shadow: 5px 5px 10px rgba(0,0,0,.55);
}
```
